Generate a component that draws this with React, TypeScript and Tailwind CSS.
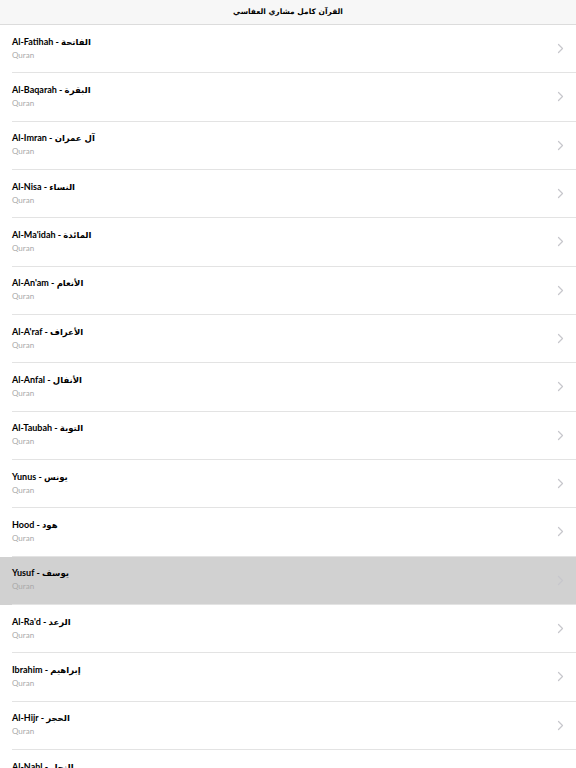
const surahs = [
  ['Al-Fatihah', 'الفاتحة'],
  ['Al-Baqarah', 'البقرة'],
  ['Al-Imran', 'آل عمران'],
  ['Al-Nisa', 'النساء'],
  ["Al-Ma'idah", 'المائدة'],
  ["Al-An'am", 'الأنعام'],
  ["Al-A'raf", 'الأعراف'],
  ['Al-Anfal', 'الأنفال'],
  ['Al-Taubah', 'التوبة'],
  ['Yunus', 'يونس'],
  ['Hood', 'هود'],
  ['Yusuf', 'يوسف'],
  ["Al-Ra'd", 'الرعد'],
  ['Ibrahim', 'إبراهيم'],
  ['Al-Hijr', 'الحجر'],
  ['Al-Nahl', 'النحل'],
];

const Chevron = () => (
  <svg width="7" height="11" viewBox="0 0 7 11" fill="none">
    <path d="M1.5 1.5l4 4-4 4" stroke="#c7c7cc" strokeWidth="1.2" strokeLinecap="round" strokeLinejoin="round" />
  </svg>
);

const App = () => {
  return (
    <div className="w-[576px] h-[768px] overflow-hidden bg-white font-['Lato','DejaVu_Sans',sans-serif]">
      <div className="h-[25px] bg-[#f7f7f7] border-b border-[#dcdcdc] flex items-center justify-center">
        <span className="text-[7.5px] font-bold text-black font-['DejaVu_Sans',sans-serif]">القرآن كامل مشاري العفاسي</span>
      </div>
      {surahs.map(([en, ar], i) => (
        <div key={i} className={`h-[48.33px] pl-3 flex ${i === 11 ? 'bg-[#d1d1d1]' : 'bg-white'}`}>
          <div className="flex-1 flex items-center border-b border-[#e3e3e3] pr-3">
            <div className="flex-1 flex flex-col -mt-[2px]">
              <span className="text-[9px] leading-[13px] font-bold text-black">
                {en} - <span className="font-['DejaVu_Sans',sans-serif] text-[8.5px] font-bold">{ar}</span>
              </span>
              <span className="text-[8px] leading-[11px] mt-[1px] text-[#a9a9a9]">Quran</span>
            </div>
            <Chevron />
          </div>
        </div>
      ))}
    </div>
  );
};

export default App;
